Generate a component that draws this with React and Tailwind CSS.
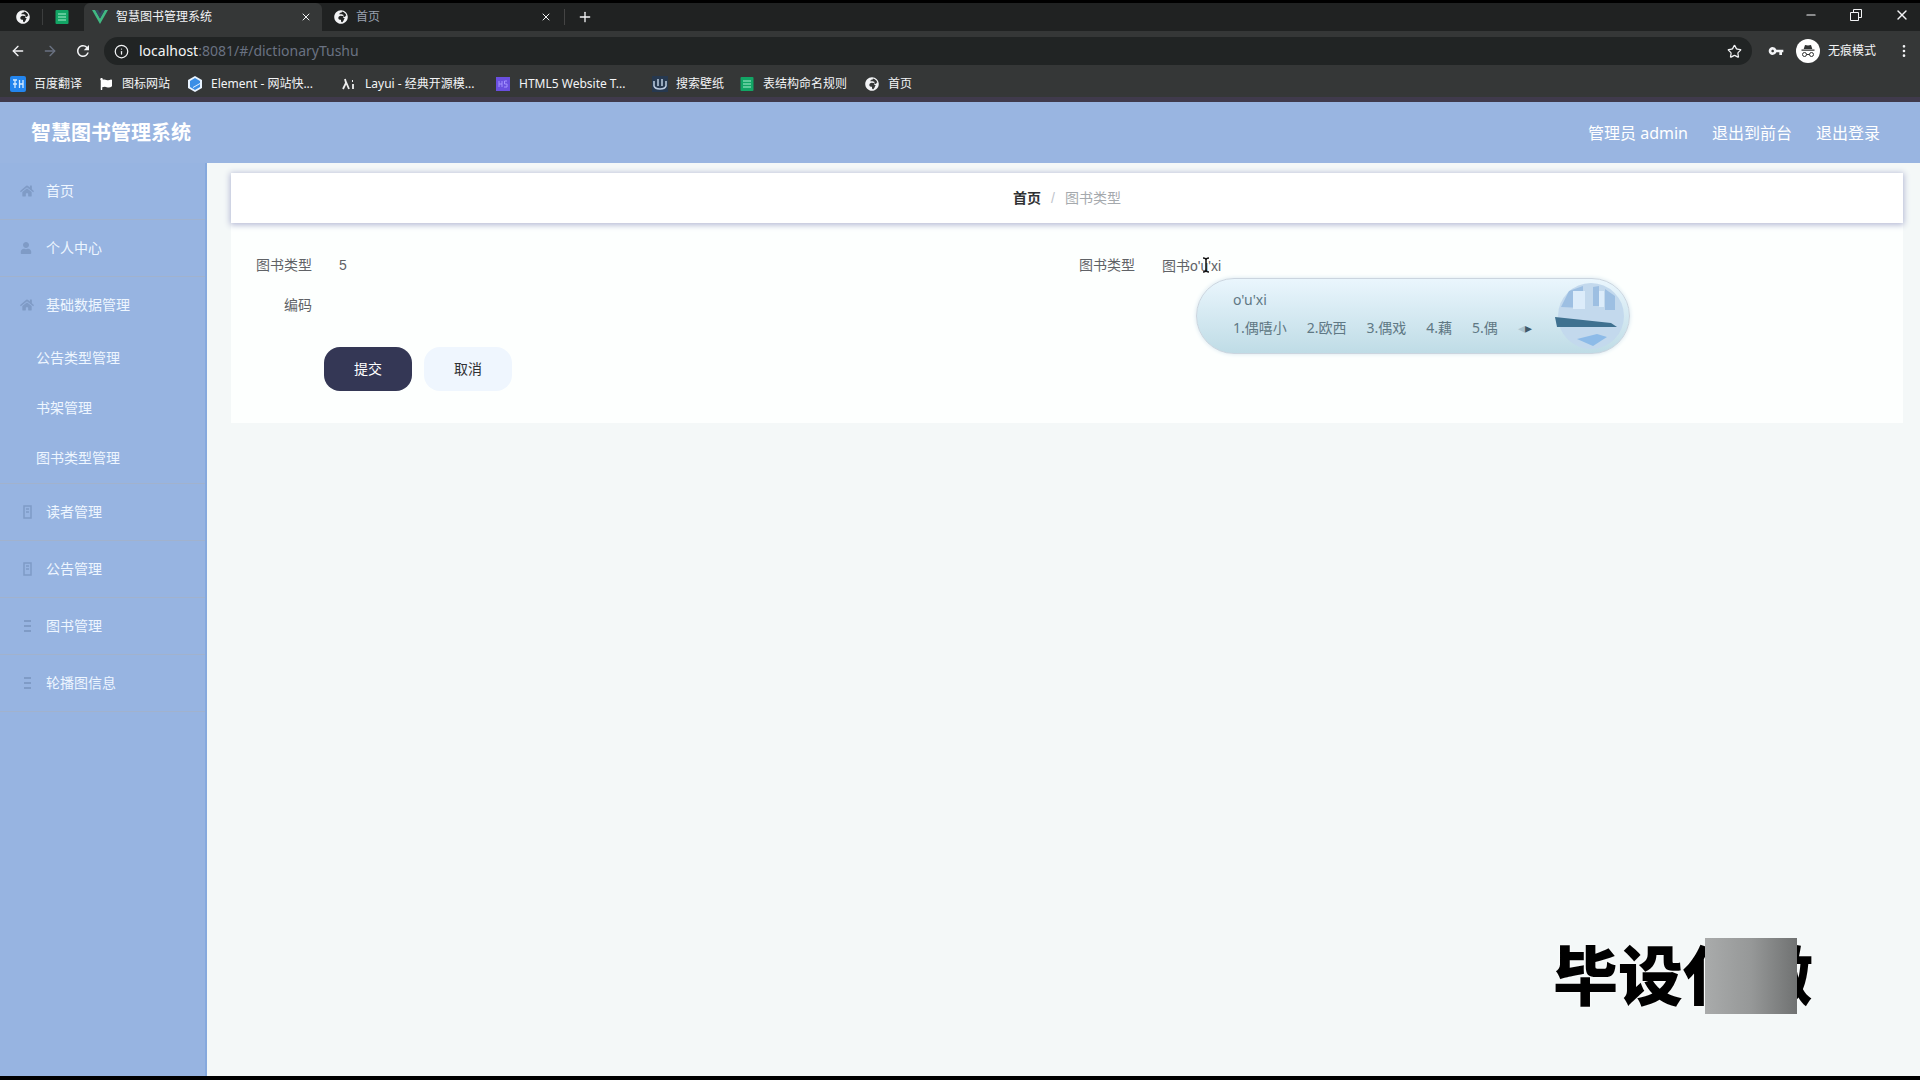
import { ArrowLeft, ArrowRight, Info, X, Plus, Star, EllipsisVertical, Minus } from "lucide-react";
import { FaGlobeAfrica, FaHome, FaUser, FaFlag } from "react-icons/fa";
import { MdRefresh, MdVpnKey } from "react-icons/md";

const menus = [
  { label: "首页", icon: "home" },
  { label: "个人中心", icon: "user" },
  { label: "基础数据管理", icon: "home", children: ["公告类型管理", "书架管理", "图书类型管理"] },
  { label: "读者管理", icon: "doc" },
  { label: "公告管理", icon: "doc" },
  { label: "图书管理", icon: "list" },
  { label: "轮播图信息", icon: "list" },
];

const bookmarks = [
  { label: "百度翻译", icon: "fanyi", box: "w-[88px]" },
  { label: "图标网站", icon: "flag", box: "w-[89px]" },
  { label: "Element - 网站快...", icon: "element", box: "w-[154px]" },
  { label: "Layui - 经典开源模...", icon: "layui", box: "w-[154px]" },
  { label: "HTML5 Website T...", icon: "h5", box: "w-[157px]" },
  { label: "搜索壁纸", icon: "wallpaper", box: "w-[87px]" },
  { label: "表结构命名规则", icon: "sheet", box: "w-[125px]" },
  { label: "首页", icon: "globe", box: "w-[64px]" },
];

const candidates = ["1.偶嘻小", "2.欧西", "3.偶戏", "4.藕", "5.偶"];

function Sheet() {
  return (
    <svg viewBox="0 0 14 14" className="size-3.5 shrink-0">
      <rect x="0.5" y="0" width="13" height="14" rx="1" fill="#12a565" />
      <path d="M3 4h8M3 7h8M3 10h8" stroke="#a9f0cd" strokeWidth="1.2" />
    </svg>
  );
}

function VueLogo() {
  return (
    <svg viewBox="0 0 16 14" className="h-3.5 w-4 shrink-0">
      <path d="M0 0h3.2L8 8.4 12.8 0H16L8 14z" fill="#41b883" />
      <path d="M3.2 0H6l2 3.6L10 0h2.8L8 8.4z" fill="#35495e" />
    </svg>
  );
}

function BookmarkIcon({ name }) {
  if (name === "globe") return <FaGlobeAfrica className="size-3.5 text-gray-100" />;
  if (name === "flag") return <FaFlag className="size-3 text-white" />;
  if (name === "sheet") return <Sheet />;
  if (name === "fanyi") {
    return (
      <svg viewBox="0 0 16 16" className="size-4">
        <rect width="16" height="16" rx="2" fill="#2385ee" />
        <path d="M3 4h4M5 4v8M3 8h4M9.5 4v8M13 4v8M9.5 8H13" stroke="#d5ebff" strokeWidth="1.3" fill="none" />
      </svg>
    );
  }
  if (name === "element") {
    return (
      <svg viewBox="0 0 16 16" className="size-4">
        <path d="M8 0l7 4v8l-7 4-7-4V4z" fill="#e8f3ff" />
        <path d="M8 2l5 3v2L6 11v1l7-4v3l-5 3-5-3V5z" fill="#3a8ee6" />
      </svg>
    );
  }
  if (name === "layui") {
    return (
      <svg viewBox="0 0 16 16" className="size-4">
        <path d="M4 3l1 4-3 6M5 6l3 7M12 8v5M11 5h1" stroke="#eee" strokeWidth="1.8" fill="none" />
      </svg>
    );
  }
  if (name === "h5") {
    return (
      <svg viewBox="0 0 14 14" className="size-3.5">
        <rect width="14" height="14" fill="#6a4fe0" />
        <path d="M3 4v6M3 7h3M6 4v6M11 4H8.5v3H11v3H8" stroke="#a493ff" fill="none" />
      </svg>
    );
  }
  return (
    <svg viewBox="0 0 16 16" className="size-4">
      <rect width="16" height="16" fill="#26384f" />
      <path d="M2 5v5q1 3 6 3t6-3V5M6 3v7M10 3v7" stroke="#bccbe0" strokeWidth="1.5" fill="none" />
    </svg>
  );
}

function MenuIcon({ name }) {
  if (name === "home") return <FaHome className="size-3.5" />;
  if (name === "user") return <FaUser className="size-3" />;
  return (
    <svg viewBox="0 0 14 14" className="size-3.5" fill="none" stroke="currentColor">
      {name === "doc" ? <path d="M4 1h7v12H4zM6 4h3M6 7h3" strokeWidth="1.5" /> : <path d="M4 2h7M4 7h7M4 12h7" strokeWidth="2" />}
    </svg>
  );
}

function Browser() {
  return (
    <div className="border-t-3 border-black bg-[#353737] text-[13px] text-gray-100">
      <div className="flex h-7 items-center bg-[#202222]">
        <div className="flex w-[84px] items-center gap-3 pl-4">
          <FaGlobeAfrica className="size-3.5" />
          <span className="h-4 w-px bg-[#3c3e3e]" />
          <Sheet />
        </div>
        <div className="flex h-full w-[238px] items-center rounded-t-md bg-[#353737] pr-2.5 pl-2">
          <VueLogo />
          <span className="ml-2 flex-1 text-xs">智慧图书管理系统</span>
          <button aria-label="关闭标签页"><X size={12} /></button>
        </div>
        <div className="flex h-full w-[238px] items-center pr-2 pl-3">
          <FaGlobeAfrica className="size-3.5" />
          <span className="ml-2 flex-1 text-xs text-gray-400">首页</span>
          <button aria-label="关闭标签页"><X size={12} /></button>
        </div>
        <button aria-label="新标签页" className="ml-1 border-l border-[#444] pl-3"><Plus size={16} /></button>
        <div className="ml-auto flex items-center gap-8 pr-2.5 pb-1">
          <button aria-label="最小化"><Minus size={14} /></button>
          <button aria-label="还原">
            <svg viewBox="0 0 12 12" className="size-3" fill="none" stroke="currentColor">
              <path d="M.5 3.5h8v8h-8zM3.5 3.5v-3h8v8h-3" />
            </svg>
          </button>
          <button aria-label="关闭"><X size={16} /></button>
        </div>
      </div>

      <div className="flex h-10 items-center pr-2">
        <div className="flex w-[104px] items-center gap-4 pl-2.5">
          <button aria-label="后退"><ArrowLeft size={16} /></button>
          <button aria-label="前进" className="text-gray-500"><ArrowRight size={16} /></button>
          <button aria-label="刷新"><MdRefresh size={18} /></button>
        </div>
        <div className="mr-2 flex h-7 flex-1 items-center rounded-full bg-[#212424] px-2.5">
          <Info size={15} />
          <p className="ml-2.5 flex-1 font-['Noto_Sans','Noto_Sans_CJK_SC',sans-serif] text-sm text-gray-100">
            localhost<span className="text-gray-500">:8081/#/dictionaryTushu</span>
          </p>
          <button aria-label="收藏"><Star size={15} /></button>
        </div>
        <MdVpnKey className="mx-2 size-4" />
        <span className="ml-1 flex size-6 items-center justify-center rounded-full bg-white text-[#303232]">
          <svg viewBox="0 0 16 16" className="size-4" fill="currentColor">
            <path d="M5 2l3 .6L11 2l1.3 4H3.7zM1.5 6.5h13v1.2h-13z" />
            <path d="M6.5 11.5h3" stroke="currentColor" />
            <circle cx="4.5" cy="11.5" r="2" fill="none" stroke="currentColor" />
            <circle cx="11.5" cy="11.5" r="2" fill="none" stroke="currentColor" />
          </svg>
        </span>
        <span className="mr-5 ml-2 text-xs">无痕模式</span>
        <button aria-label="更多"><EllipsisVertical size={16} /></button>
      </div>

      <nav className="flex h-[26px] items-center pl-2.5 font-['Noto_Sans','Noto_Sans_CJK_SC',sans-serif] text-xs">
        {bookmarks.map(({ label, icon, box }) => (
          <a key={label} href="#/" className={`flex items-center gap-2 whitespace-nowrap ${box}`}>
            <span className="flex size-4 shrink-0 items-center justify-center"><BookmarkIcon name={icon} /></span>
            {label}
          </a>
        ))}
      </nav>
      <div className="h-[5px] bg-[#403a4c]" />
    </div>
  );
}

function ImePopup() {
  return (
    <div className="absolute top-[33px] left-[49px] flex h-[76px] w-[434px] flex-col justify-center rounded-full border border-[#cbd5df] bg-linear-to-b from-[#eaf6fd] to-[#bfdce6] pb-1 pl-9 font-['Noto_Sans','Noto_Sans_CJK_SC',sans-serif] text-sm text-[#5f7884] shadow-[0_0_4px_#d5e5ef]">
      <p className="leading-7">o'u'xi</p>
      <ul className="flex gap-5 leading-7 whitespace-nowrap">
        {candidates.map((c) => (
          <li key={c}>{c}</li>
        ))}
        <li className="text-[#3f5968]"><span className="text-[#a9c3d0]">◂</span>▸</li>
      </ul>
      <svg viewBox="0 0 80 76" className="absolute top-0 right-0 h-[76px] w-20">
        <circle cx="42" cy="37" r="33" fill="#c3d9ed" />
        <path d="M12 28l8-16 14-5v22zM44 8l6-1v20h-6zM56 10l10 7v14H56z" fill="#9dbfe2" />
        <path d="M24 12h12v18H24zM50 12h5v16h-5z" fill="#dcecfa" />
        <path d="M6 38l56 6 6 4-60 0z" fill="#3f7190" />
        <path d="M28 60l20-5 10 3-14 9z" fill="#8dbbe8" />
      </svg>
    </div>
  );
}

export default function App() {
  return (
    <div className="flex min-h-screen flex-col border-b-4 border-black bg-[#f4f8f8] font-['Liberation_Sans','Noto_Sans_CJK_SC',sans-serif]">
      <Browser />
      <header className="flex h-[61px] items-center justify-between bg-[#99b5e1] pr-10 pl-[31px] font-['Noto_Sans','Noto_Sans_CJK_SC',sans-serif] text-white">
        <h1 className="text-xl font-bold">智慧图书管理系统</h1>
        <div className="flex gap-6 text-base">
          <span>管理员 admin</span>
          <a href="#/front">退出到前台</a>
          <a href="#/login">退出登录</a>
        </div>
      </header>

      <div className="flex flex-1">
        <aside className="w-[207px] shrink-0 border-r-2 border-[#86a9dd] bg-[#97b4e1] text-sm text-[#eef6ff]">
          <ul>
            {menus.map(({ label, icon, children }) => (
              <li key={label} className="border-b border-[#a1b2cd]">
                <a href="#/" className="flex h-14 items-center pl-5">
                  <span className="flex w-[26px] text-[#7f9bc6]"><MenuIcon name={icon} /></span>
                  {label}
                </a>
                {children?.map((child) => (
                  <a key={child} href="#/" className="flex h-[50px] items-center pl-9">{child}</a>
                ))}
              </li>
            ))}
          </ul>
        </aside>

        <main className="relative min-w-0 flex-1 pt-2.5 pr-[17px] pl-6">
          <nav className="relative flex h-[50px] items-center justify-center gap-2.5 bg-white text-sm shadow-[0_1px_6px_1px_#b4b9d4]">
            <a href="#/" className="font-bold text-[#303133]">首页</a>
            <span className="text-[#c0c4cc]">/</span>
            <span className="text-[#a5a9ad]">图书类型</span>
          </nav>

          <form className="bg-[#fdfffe] px-[13px] pt-[22px] pb-8 text-sm text-[#606266]">
            <div className="mb-[22px] grid grid-cols-2">
              <div className="flex items-start">
                <label htmlFor="code" className="w-20 shrink-0 pr-3 text-right leading-10">图书类型编码</label>
                <input id="code" defaultValue="5" className="h-10 min-w-0 flex-1 bg-transparent px-[15px] outline-none" />
              </div>
              <div className="flex items-start">
                <label htmlFor="type" className="w-20 shrink-0 pr-3 text-right leading-10">图书类型</label>
                <div className="relative flex-1">
                  <input id="type" defaultValue="图书o'u'xi" className="h-10 w-full bg-transparent px-[15px] outline-none" />
                  <svg viewBox="0 0 8 16" className="absolute top-3 left-[55px] h-4 w-2" fill="none" stroke="#111">
                    <path d="M1 1q3 0 3 2 0-2 3-2M4 2v12M1 15q3 0 3-2 0 2 3 2" strokeWidth="1.5" />
                  </svg>
                  <ImePopup />
                </div>
              </div>
            </div>
            <div className="flex gap-3 pl-20">
              <button type="button" className="h-11 w-[88px] rounded-2xl bg-[#343755] text-white">提交</button>
              <button type="button" className="h-11 w-[88px] rounded-2xl bg-[#eff6fe] text-[#303133]">取消</button>
            </div>
          </form>

          <div className="absolute right-[107px] bottom-[58px] text-[65px] leading-[80px] font-black whitespace-nowrap text-black [text-shadow:0_0_3px_#fff]">
            毕设代做
            <span className="absolute top-0 right-4 h-[76px] w-[92px] bg-linear-to-r from-[#a9abab] via-[#969898] to-[#707272]" />
          </div>
        </main>
      </div>
    </div>
  );
}
